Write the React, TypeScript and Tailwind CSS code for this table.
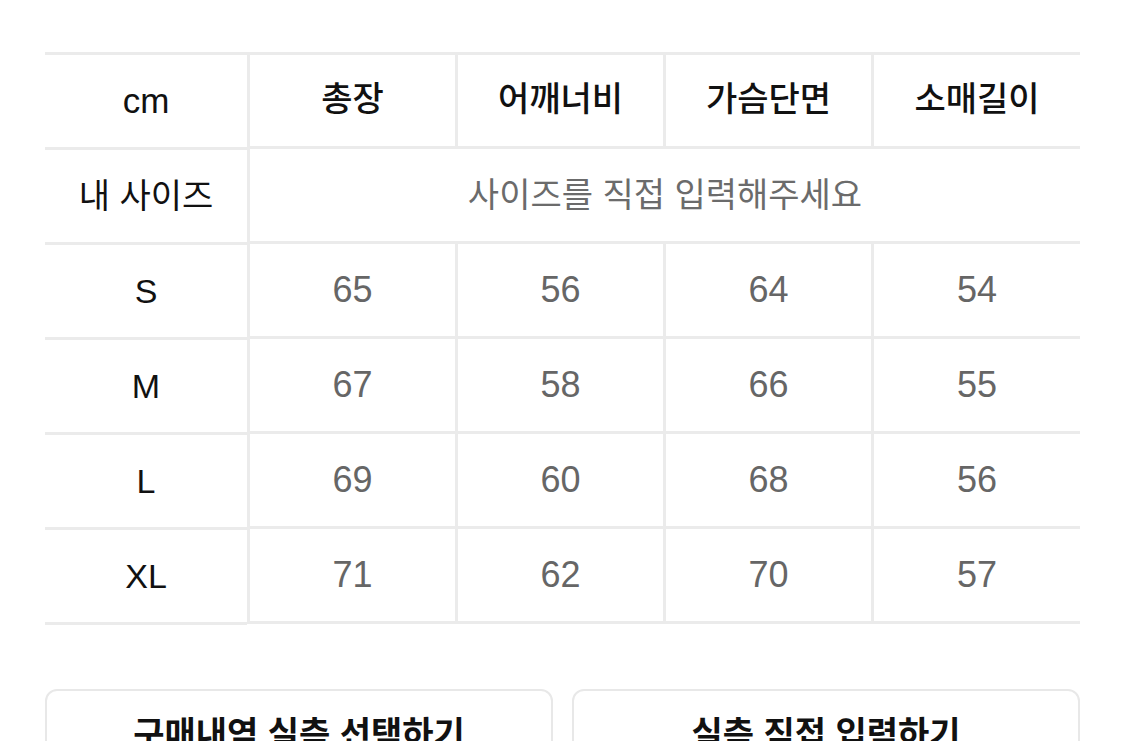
import React from "react";

const font = { fontFamily: '"Liberation Sans", "Noto Sans CJK KR", sans-serif' };

const headers = ["총장", "어깨너비", "가슴단면", "소매길이"];
const rows: { size: string; vals: string[] }[] = [
  { size: "S", vals: ["65", "56", "64", "54"] },
  { size: "M", vals: ["67", "58", "66", "55"] },
  { size: "L", vals: ["69", "60", "68", "56"] },
  { size: "XL", vals: ["71", "62", "70", "57"] },
];

export default function App() {
  return (
    <div className="w-[1125px] h-[741px] overflow-hidden bg-white" style={font}>
      <div className="pl-[45px] pr-[45px] pt-[52px]">
        <div className="flex">
          {/* left fixed column */}
          <div className="w-[202px] shrink-0 border-t-[3px] border-[#ebebeb]">
            <div className="h-[95px] flex items-center justify-center border-b-[3px] border-[#ebebeb] text-[35px] text-[#111]">
              cm
            </div>
            <div className="h-[95px] flex items-center justify-center border-b-[3px] border-[#ebebeb] text-[34px] text-[#111]">
              내 사이즈
            </div>
            {rows.map((r) => (
              <div
                key={r.size}
                className="h-[95px] flex items-center justify-center border-b-[3px] border-[#ebebeb] text-[34px] text-[#111]"
              >
                {r.size}
              </div>
            ))}
          </div>
          {/* right table */}
          <div className="flex-1 border-t-[3px] border-[#ebebeb]">
            <div className="grid grid-cols-[208px_208px_208px_1fr] h-[94px] border-b-[3px] border-[#ebebeb]">
              {headers.map((h) => (
                <div
                  key={h}
                  className="flex items-center justify-center border-l-[3px] border-[#ebebeb] text-[34px] font-medium text-[#111] pb-[2px]"
                >
                  {h}
                </div>
              ))}
            </div>
            <div className="h-[95px] flex items-center justify-center border-l-[3px] border-b-[3px] border-[#ebebeb] text-[34px] text-[#6b6b6b]">
              사이즈를 직접 입력해주세요
            </div>
            {rows.map((r) => (
              <div
                key={r.size}
                className="grid grid-cols-[208px_208px_208px_1fr] h-[95px] border-b-[3px] border-[#ebebeb]"
              >
                {r.vals.map((v, i) => (
                  <div
                    key={i}
                    className="flex items-center justify-center border-l-[3px] border-[#ebebeb] text-[36px] text-[#666]"
                  >
                    {v}
                  </div>
                ))}
              </div>
            ))}
          </div>
        </div>

        <div className="mt-[64px] grid grid-cols-2 gap-[19px]">
          <button className="h-[90px] rounded-[12px] border-2 border-[#e8e8e8] bg-white flex items-center justify-center text-[34px] font-bold text-[#111]">
            구매내역 실측 선택하기
          </button>
          <button className="h-[90px] rounded-[12px] border-2 border-[#e8e8e8] bg-white flex items-center justify-center text-[34px] font-bold text-[#111]">
            실측 직접 입력하기
          </button>
        </div>
      </div>
    </div>
  );
}
